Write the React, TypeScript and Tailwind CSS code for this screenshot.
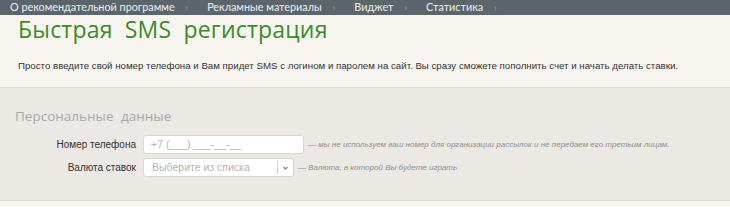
import React from "react";

const NAV = ["О рекомендательной программе", "Рекламные материалы", "Виджет", "Статистика"];

export default function App() {
  return (
    <div className="w-[730px] h-[207px] overflow-hidden bg-[#f8f5f0] font-['Liberation_Sans',sans-serif]">
      {/* NAV */}
      <div className="flex h-[15px] items-center bg-[#5a666c] pl-[10px] font-['Lato',sans-serif] text-[10.8px] text-[#eef0f0]">
        {NAV.map((item) => (
          <div key={item} className="flex items-center">
            <span>{item}</span>
            <span className="ml-[11px] mr-[19px] text-[9px] text-[#9aa4a8]">›</span>
          </div>
        ))}
      </div>

      {/* TITLE */}
      <h1 className="ml-[18px] mt-[1px] h-[26px] font-['Open_Sans',sans-serif] text-[23px] leading-[26px] tracking-[0.2px] text-[#3c8a2c] [word-spacing:6px]">
        Быстрая SMS регистрация
      </h1>

      <p className="ml-[18px] mt-[17px] whitespace-nowrap text-[9.7px] leading-[13px] text-[#333]">
        Просто введите свой номер телефона и Вам придет SMS с логином и паролем на сайт. Вы сразу сможете пополнить счет и начать делать ставки.
      </p>

      {/* FORM */}
      <div className="mt-[15px] h-[114px] border-y border-[#dcd8d3] bg-[#ece8e4]">
        <div className="ml-[15px] mt-[20px] font-['Open_Sans',sans-serif] text-[13.5px] leading-[16px] text-[#a7a9aa] [word-spacing:4px]">
          Персональные данные
        </div>

        <div className="mt-[11px] flex items-center">
          <div className="w-[136px] text-right text-[10px] text-[#333]">Номер телефона</div>
          <div className="ml-[7px] flex h-[19px] w-[161px] items-center rounded-[3px] border border-[#d8d4d0] bg-white pl-[7px] text-[10.5px] text-[#b4b4b4]">
            +7 (___) ___-__-__
          </div>
          <div className="ml-[4px] text-[8px] italic text-[#8e8e8e]">
            — мы не используем ваш номер для организации рассылок и не передаем его третьим лицам.
          </div>
        </div>

        <div className="mt-[4px] flex items-center">
          <div className="w-[136px] text-right text-[10px] text-[#333]">Валюта ставок</div>
          <div className="ml-[7px] flex h-[19px] w-[151px] items-center rounded-[3px] border border-[#d8d4d0] bg-white text-[10.5px] text-[#b4b4b4]">
            <span className="flex-1 pl-[8px]">Выберите из списка</span>
            <span className="h-[13px] w-px bg-[#cfcfcf]" />
            <svg width="15" height="10" viewBox="0 0 15 10" className="text-[#888]">
              <path d="M5.5 4 L7.5 6 L9.5 4" fill="none" stroke="currentColor" strokeWidth="1.3" />
            </svg>
          </div>
          <div className="ml-[4px] text-[8px] italic text-[#8e8e8e]">— Валюта, в которой Вы будете играть</div>
        </div>
      </div>
    </div>
  );
}
